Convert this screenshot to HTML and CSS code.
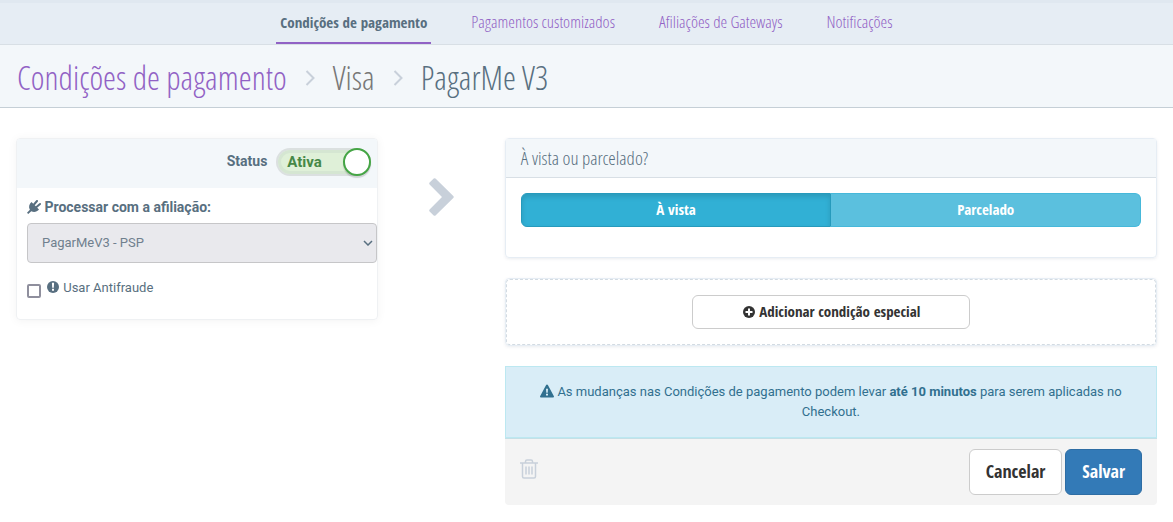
FILE: index.html
```html
<!DOCTYPE html>
<html lang="pt-BR">
<head>
  <meta charset="UTF-8">
  <meta name="viewport" content="width=device-width, initial-scale=1.0">
  <title>Condições de pagamento</title>
  <link rel="stylesheet" href="styles.css">
</head>
<body>
  <nav class="tabs">
    <a class="tabs-item tabs-item_active" href="#">Condições de pagamento</a>
    <a class="tabs-item" href="#">Pagamentos customizados</a>
    <a class="tabs-item" href="#">Afiliações de Gateways</a>
    <a class="tabs-item" href="#">Notificações</a>
  </nav>

  <header class="page-header">
    <h1 class="breadcrumb">
      <a class="breadcrumb-link" href="#">Condições de pagamento</a>
      <svg class="breadcrumb-arrow" viewBox="0 0 10 16"><path d="M1.5 1 8.500 8l-7 7"/></svg>
      <span class="breadcrumb-brand">Visa</span>
      <svg class="breadcrumb-arrow" viewBox="0 0 10 16"><path d="M1.5 1 8.500 8l-7 7"/></svg>
      <span>PagarMe V3</span>
    </h1>
  </header>

  <main class="content">
    <section class="card affiliation">
      <div class="status">
        <span class="status-label" id="status-label">Status</span>
        <button class="switch" type="button" role="switch" aria-checked="true" aria-labelledby="status-label">
          <span class="switch-text">Ativa</span>
          <span class="switch-handle"></span>
        </button>
      </div>
      <div class="affiliation-body">
        <label class="field-label" for="affiliation">
          <svg class="icon" viewBox="0 0 14 14"><path d="M4.500 2 12 9.500C10 12 6.800 12.600 4.300 11.200L1.200 14 0 12.800l2.900-3.100C1.400 7.200 2 4 4.500 2Z"/><path class="icon-stroke" d="M7 4.500 10 1M9.500 7 13 4"/></svg>
          Processar com a afiliação:
        </label>
        <div class="select-wrapper">
          <select class="select" id="affiliation" disabled>
            <option>PagarMeV3 - PSP</option>
          </select>
          <svg class="select-arrow" viewBox="0 0 10 6"><path d="M1 1l4 4 4-4"/></svg>
        </div>
        <div class="antifraud">
          <input class="checkbox" type="checkbox" id="antifraud">
          <label class="antifraud-label" for="antifraud">
            <svg class="icon" viewBox="0 0 14 14"><circle cx="7" cy="7" r="6"/><path class="icon-cut" d="M5.900 2.800h2.200l-.3 5H6.200zM6 8.800h2v2H6z"/></svg>
            Usar Antifraude
          </label>
        </div>
      </div>
    </section>

    <svg class="flow-arrow" viewBox="0 0 26 38"><path d="M6.500.6 24.300 18.100q.9.900 0 1.800L6.500 37.400q-.9.800-1.800 0L.6 33.400q-.8-.9 0-1.800L13 19 .6 6.400q-.8-.9 0-1.800L4.700.6q.9-.8 1.800 0Z"/></svg>

    <div class="conditions">
      <section class="card">
        <h2 class="card-title">À vista ou parcelado?</h2>
        <div class="card-body">
          <div class="btn-group">
            <button class="btn btn-info btn-info_active" type="button">À vista</button>
            <button class="btn btn-info" type="button">Parcelado</button>
          </div>
        </div>
      </section>

      <section class="card">
        <div class="add-area">
          <button class="btn btn-add" type="button">
            <svg class="icon" viewBox="0 0 14 14"><circle cx="7" cy="7" r="6"/><path class="icon-cut" d="M6 3.500h2V6h2.500v2H8v2.500H6V8H3.500V6H6z"/></svg>
            Adicionar condição especial
          </button>
        </div>
      </section>

      <section>
        <p class="alert">
          <svg class="icon" viewBox="0 0 14 14"><path d="M7 .5c.4 0 .7.2.9.600l6 11.200c.3.600-.1 1.200-.8 1.200H.9c-.7 0-1.100-.6-.8-1.200l6-11.200c.2-.4.5-.6.900-.6Z"/><path class="icon-cut" d="M6 4.800h2l-.3 4H6.300zM6 9.800h2v1.800H6z"/></svg>
          As mudanças nas Condições de pagamento podem levar <strong>até 10 minutos</strong> para serem aplicadas no Checkout.
        </p>
        <div class="actions">
          <button class="btn-trash" type="button" aria-label="Excluir">
            <svg viewBox="0 0 18 20"><path d="M0 4h18M2.500 4v13.500q0 1.500 1.500 1.500h10q1.500 0 1.500-1.500V4M5.500 4V2.500Q5.500 1 7 1h4q1.500 0 1.500 1.500V4M6 7.500v8M9 7.500v8M12 7.500v8"/></svg>
          </button>
          <button class="btn btn-lg" type="button">Cancelar</button>
          <button class="btn btn-lg btn-primary" type="button">Salvar</button>
        </div>
      </section>
    </div>
  </main>
</body>
</html>
```
FILE: styles.css
```css
* {
  box-sizing: border-box;
  margin: 0;
  padding: 0;
}

body {
  background-color: #fff;
  color: #586f80;
  font: 13px/20px Roboto, "Liberation Sans", sans-serif;
}

button,
select {
  font: inherit;
  color: inherit;
}

button {
  cursor: pointer;
}

.tabs,
.breadcrumb,
.card-title {
  font-family: "Open Sans Condensed Light", "Open Sans Condensed", sans-serif;
}

.tabs-item_active,
.btn {
  font-family: "Open Sans Condensed", sans-serif;
}

/* top tabs */
.tabs {
  display: flex;
  justify-content: center;
  gap: 36px;
  border-top: 3px solid #e0e8f0;
  border-bottom: 1px solid #d8dfe5;
  background-color: #e6edf4;
}

.tabs-item {
  padding: 8px 4px 9px;
  border-bottom: 2px solid transparent;
  font-size: 17px;
  line-height: 22px;
  color: #9162c5;
  text-decoration: none;
}

.tabs-item_active {
  border-color: #9162c5;
  font-size: 15px;
  font-weight: bold;
  color: #586f80;
}

.page-header {
  padding: 16px 17px 12px;
  border-bottom: 1px solid #c5cfd6;
  background-color: #f3f7fa;
}

.breadcrumb {
  display: flex;
  align-items: center;
  gap: 18px;
  font-size: 33px;
  font-weight: normal;
  line-height: 34px;
}

.breadcrumb-link {
  color: #9162c5;
  text-decoration: none;
}

.breadcrumb-brand {
  color: #777;
}

.breadcrumb-arrow {
  width: 10px;
  height: 16px;
  fill: none;
  stroke: #c8d0da;
  stroke-width: 2;
}

.content {
  display: grid;
  grid-template-columns: 5fr 1fr 9fr;
  align-items: start;
  gap: 27px;
  padding: 30px 16px 17px;
}

.card {
  border: 1px solid #e6edf4;
  border-radius: 4px;
  box-shadow: 0 1px 3px rgba(88, 111, 128, .12);
}

/* affiliation */
.affiliation {
  overflow: hidden;
  border-color: #eff1f3;
  box-shadow: 0 1px 10px rgba(0, 0, 0, .05);
}

.status {
  display: flex;
  align-items: center;
  justify-content: flex-end;
  gap: 9px;
  padding: 9px 6px 12px;
  background-color: #f3f7fa;
}

.status-label {
  padding-bottom: 3px;
  font-size: 14px;
  font-weight: bold;
}

.switch {
  display: flex;
  align-items: center;
  justify-content: space-between;
  width: 95px;
  height: 28px;
  padding-left: 9px;
  border: 2px solid #dbe0e0;
  border-right: none;
  border-radius: 14px;
  background-color: #dff0d8;
  box-shadow: inset 0 0 0 3px #d5e6d2;
  font-size: 15px;
  font-weight: bold;
  color: #468847;
}

.switch-handle {
  width: 28px;
  height: 28px;
  border: 2px solid #45a545;
  border-radius: 50%;
  background-color: #fff;
  box-shadow: 0 2px 1px rgba(0, 0, 0, .15);
}

.affiliation-body {
  padding: 9px 0 21px 10px;
}

.field-label {
  display: block;
  margin-bottom: 6px;
  font-size: 14px;
  font-weight: bold;
}

.icon {
  width: 14px;
  height: 14px;
  vertical-align: -2px;
  fill: currentColor;
}

.icon-stroke {
  stroke: currentColor;
  stroke-width: 2;
  stroke-linecap: round;
}

.icon-cut {
  fill: #fff;
}

.select-wrapper {
  display: grid;
  align-items: center;
}

.select,
.select-arrow {
  grid-area: 1 / 1;
}

.select {
  appearance: none;
  width: 100%;
  height: 40px;
  padding: 0 14px;
  border: 1px solid #c6c6c8;
  border-radius: 4px;
  background-color: #e9e9ed;
  color: #70808e;
  opacity: 1;
}

.select-arrow {
  justify-self: end;
  width: 10px;
  height: 6px;
  margin-right: 4px;
  fill: none;
  stroke: #586f80;
  stroke-width: 1.5;
}

.antifraud {
  display: flex;
  align-items: flex-end;
  gap: 5px;
  padding: 15px 0 0;
}

.checkbox {
  appearance: none;
  width: 14px;
  height: 14px;
  border: 2px solid #8f8f9d;
  border-radius: 2px;
  background-color: #fff;
}

.checkbox:checked {
  background-color: #337ab7;
}

.flow-arrow {
  justify-self: center;
  width: 26px;
  height: 38px;
  margin-top: 40px;
  fill: #c8d0da;
}

/* conditions */
.conditions {
  display: flex;
  flex-direction: column;
  gap: 20px;
}

.card-title {
  padding: 8px 15px;
  border-bottom: 1px solid #d8dfe5;
  background-color: #f3f7fa;
  font-size: 19px;
  font-weight: normal;
  line-height: 22px;
}

.card-body {
  padding: 15px 15px 30px;
}

.btn-group {
  display: flex;
}

.btn {
  padding: 5px 12px 7px;
  border: 1px solid #ccc;
  border-radius: 6px;
  background-color: #fff;
  font-size: 15px;
  font-weight: bold;
  color: #333;
}

.btn-info {
  flex: 1;
  border-color: #46b8da;
  border-left: none;
  border-radius: 0 6px 6px 0;
  background-color: #5bc0de;
  color: #fff;
}

.btn-info_active {
  border: 1px solid #269abc;
  border-radius: 6px 0 0 6px;
  background-color: #31b0d5;
  box-shadow: inset 0 3px 5px rgba(0, 0, 0, .125);
}

.add-area {
  display: flex;
  justify-content: center;
  padding: 15px;
  border: 1px dashed #d3dbe2;
  border-radius: 4px;
}

.btn-add {
  width: 45%;
}

.alert {
  padding: 15px;
  border: 1px solid #bce8f1;
  background-color: #d9edf7;
  line-height: 20px;
  text-align: center;
  color: #31708f;
}

.alert .icon-cut {
  fill: #d9edf7;
}

.actions {
  display: flex;
  align-items: flex-start;
  gap: 3px;
  padding: 10px 15px;
  border-top: 1px solid #c5dfe6;
  border-radius: 0 0 4px 4px;
  background-color: #f4f4f4;
}

.btn-lg {
  padding: 9px 16px 11px;
  font-size: 18px;
  line-height: 24px;
}

.btn-primary {
  border-color: #2e6da4;
  background-color: #337ab7;
  color: #fff;
}

.btn-trash {
  width: 18px;
  margin: 10px auto 0 0;
  border: none;
  background: none;
}

.btn-trash svg {
  display: block;
  width: 18px;
  height: 20px;
  fill: none;
  stroke: #c8d0da;
  stroke-width: 1.5;
}
```
